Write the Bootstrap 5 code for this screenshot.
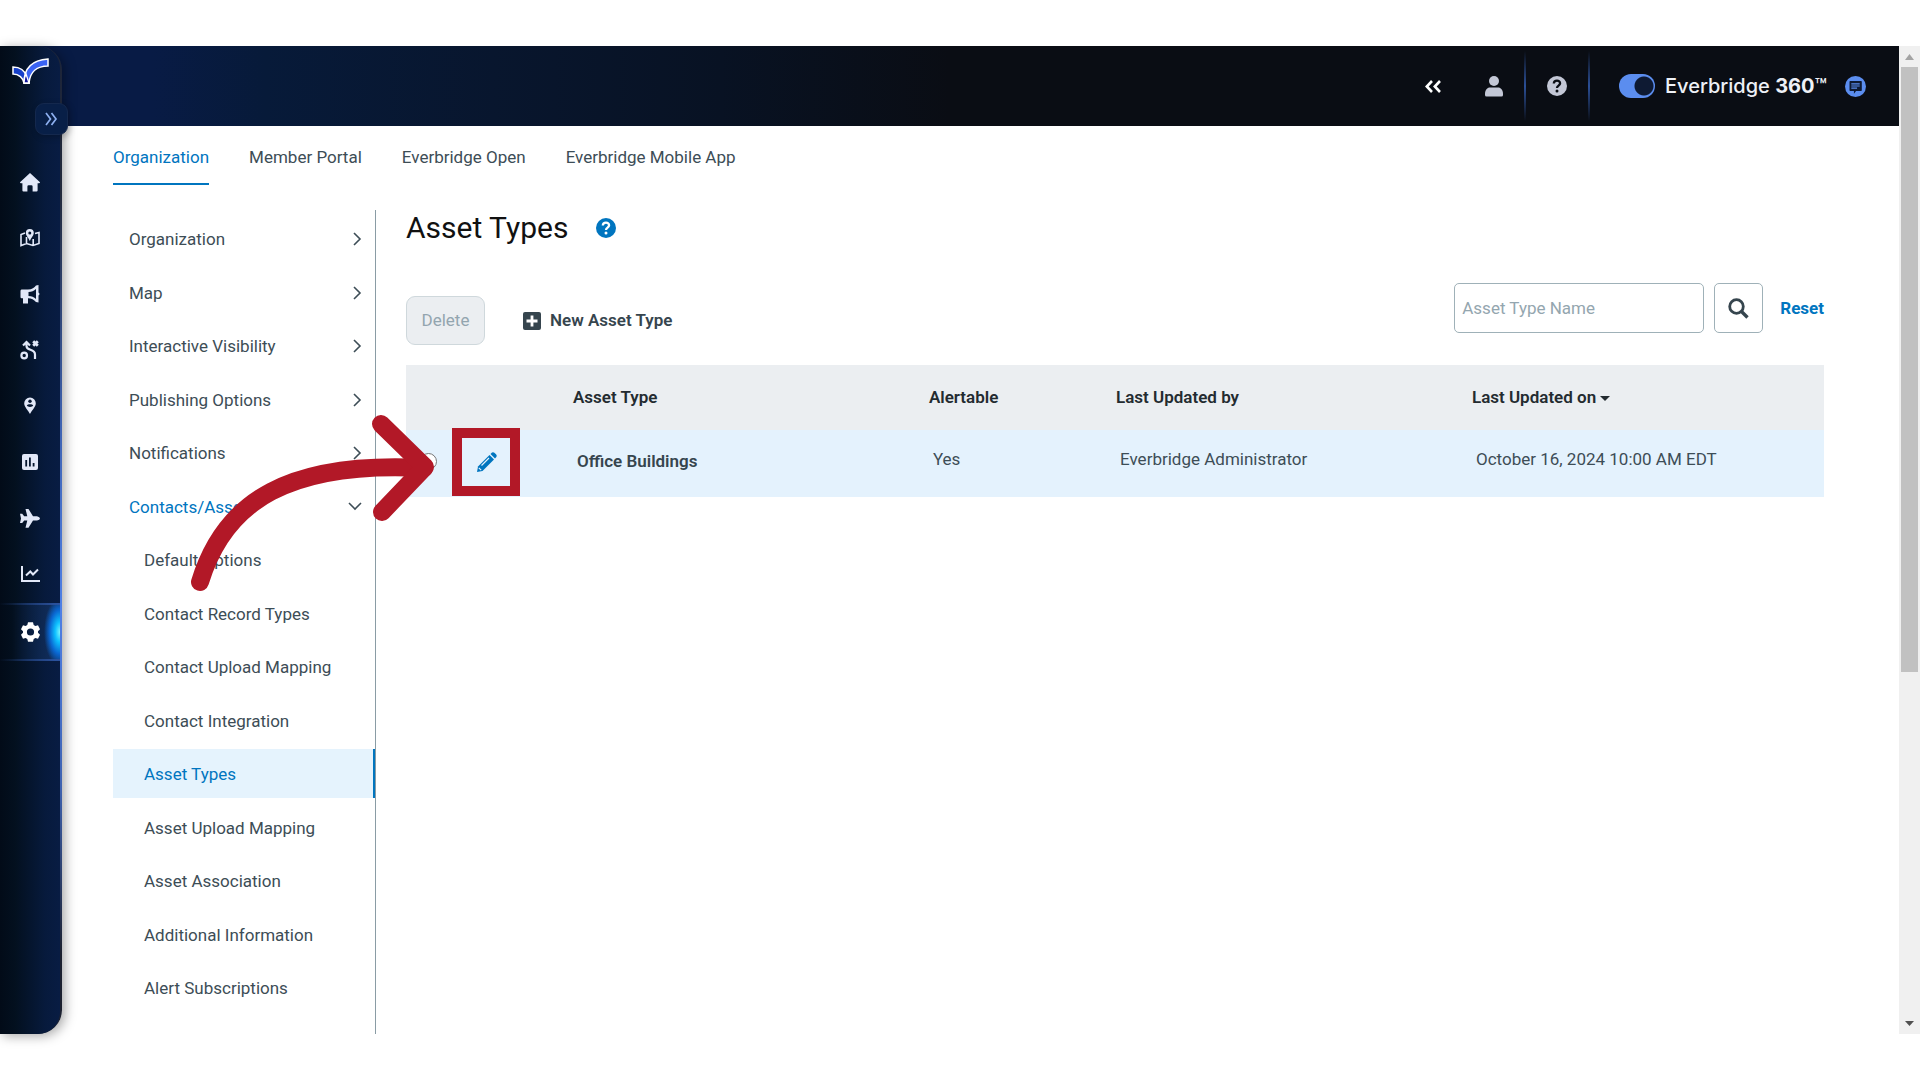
<!DOCTYPE html>
<html lang="en">
<head>
<meta charset="utf-8">
<meta name="viewport" content="width=device-width, initial-scale=1">
<title>Asset Types</title>
<link href="https://cdn.jsdelivr.net/npm/bootstrap@5.3.0/dist/css/bootstrap.min.css" rel="stylesheet">
<style>
  :root { --ink:#3d4d56; --blue:#0075bf; --line:#8a9ca5; --red:#b21827; }
  body { font-family:Roboto,"Liberation Sans",sans-serif; font-size:17px; line-height:24px; color:var(--ink); background:#fff; }
  a { color:inherit; text-decoration:none; }
  svg { display:block; flex:none; }
  .app-frame { margin:46px 0; min-height:calc(100vh - 92px); }

  /* left rail */
  .rail { width:62px; z-index:3; border-radius:0 24px 24px 0; padding-right:2px;
    background:linear-gradient(180deg,#1c2438 0%,#232a3c 15%,#3e62b0 38%,#4f80e6 57%,#3e62b0 75%,#1c2130 92%);
    box-shadow:3px 2px 12px rgba(0,0,0,.35); }
  .rail-inner { border-radius:0 22px 22px 0; background:linear-gradient(90deg,#020b18 0%,#03101f 25%,#071a3c 75%,#081c43 100%); }
  .rail-logo { padding:12px 0 0 12px; height:57px; }
  .rail-toggle { width:33px; height:32px; margin-left:35px; border:1px solid #14284d; border-radius:9px; background:#081f47; color:#8db0f0; box-shadow:2px 2px 6px rgba(0,0,0,.25); }
  .rail-links { padding-top:19px; }
  .rail-links a { height:56px; color:#e2e8f8; }
  .rail-links a.current { height:58px; margin-top:1px; color:#fff; border:solid; border-width:2px 0;
    border-image:linear-gradient(90deg,transparent,#2c519c) 1;
    background:radial-gradient(ellipse 16px 34px at 100% 50%,#7df6ff 0%,#0ec0ff 30%,#0a66d0 65%,transparent 100%),linear-gradient(90deg,transparent 20%,#12305f); }

  /* top bar */
  .topbar { height:80px; margin-left:-62px; padding-right:33px; background:linear-gradient(90deg,#081b45 0%,#081b45 8%,#071a39 14%,#08162e 26%,#081223 38%,#0a0d14 50%); color:#c3c7d6; }
  .topbar button { color:inherit; }
  .top-collapse.btn { margin-right:44px; }
  .top-user.btn { margin-right:21px; }
  .top-brand { gap:10px; margin:0 18px 0 29px; }
  .divider { width:2px; height:70px; background:linear-gradient(180deg,transparent,#2b4f97 50%,transparent); }
  .brand-switch.form-check-input { width:36px; height:24px; margin:0; border:0; background-color:#5b8def;
    background-image:radial-gradient(circle,#0e1a33 9px,transparent 10px); background-size:20px 20px; background-position:right 1px center; }
  .brand-label { font-family:Inter,Roboto,sans-serif; font-size:20px; font-weight:500; color:#eef1f7; }
  .brand-label b { font-weight:700; }

  /* tabs and menu */
  .workspace { padding:18px 75px 0 51px; }
  .tab-row { gap:40px; height:42px; }
  .tab-row a { height:41px; padding-top:1px; }
  .tab-row a.current { color:var(--blue); border-bottom:2px solid var(--blue); }
  .side-menu { width:263px; padding-top:4px; border-right:1px solid var(--line); }
  .side-menu li { margin-bottom:4px; }
  .side-menu li:nth-child(odd) { margin-bottom:5px; }
  .side-menu a { height:49px; padding:0 13px 0 16px; }
  .side-menu .sub a { padding-left:31px; }
  .side-menu .open a { color:var(--blue); }
  .side-menu .current a { color:var(--blue); background:#e5f3fd; border-right:2px solid var(--blue); }

  /* content */
  .content { padding-left:30px; }
  .content h1 { font-size:30px; line-height:36px; font-weight:400; color:#111; }
  .toolbar-row { margin-top:37px; }
  .action-group { gap:38px; padding:13px 0 20px; }
  .btn-del.btn { width:79px; height:49px; font-size:17px; border-color:#cfd8dc; border-radius:9px; background:#ebeef1; color:#93a5af; opacity:1; padding:0; }
  .btn-new.btn { gap:9px; color:#36454e; font-weight:600; font-size:17px; }
  .find-group { gap:10px; }
  .find-box.form-control { width:250px; height:50px; padding:0 7px; font-size:17px; border-color:#9fb1b8; border-radius:5px; color:var(--ink); }
  .find-box::placeholder { color:#94a6af; }
  .find-btn.btn { width:49px; height:50px; padding:0; border-color:#9fb1b8; border-radius:5px; color:#36454e; }
  .find-reset { margin-left:7px; color:var(--blue); }
  .asset-grid { table-layout:fixed; margin:0; }
  .asset-grid th { height:65px; padding:0 0 2px 11px; background:#ebeef1; color:#232b30; font-weight:600; vertical-align:middle; border:0; }
  .asset-grid td { height:67px; padding:0 0 9px 15px; background:#e4f2fd; color:var(--ink); vertical-align:middle; border:0; }
  .asset-grid td.strong-cell { font-weight:600; padding-bottom:5px; color:#36454e; }
  .asset-grid td.tool-cell { padding:0; vertical-align:top; }
  .asset-grid .form-check-input { width:17px; height:17px; margin:23px 0 0 14px; border:1px solid #767676; background:#fff; }
  .edit-box { width:68px; height:68px; margin:-2px 0 0 15px; border:10px solid var(--red); color:var(--blue); }
  .caret { display:inline-block; border:5px solid transparent; border-top-color:currentColor; border-bottom:0; vertical-align:middle; }

  .pointer { left:190px; top:367px; z-index:4; pointer-events:none; }
  .scroller { width:21px; background:#f0f0f0; padding:0 2px; }
  .scroller button { height:21px; color:#a3a3a3; }
  .scroller .thumb { height:605px; background:#c1c1c1; }
</style>
<script src="https://cdn.jsdelivr.net/npm/bootstrap@5.3.0/dist/js/bootstrap.bundle.min.js"></script>
</head>
<body>
<div class="app-frame d-flex position-relative">

  <aside class="rail d-flex flex-shrink-0 position-relative">
    <div class="rail-inner w-100">
      <a href="#" class="rail-logo d-block" aria-label="Everbridge home">
        <svg width="38" height="27" viewBox="0 0 38 27">
          <path d="M1 9C8 9 13 13 15 19L17 25H12C11 20 7 16 1 16Z" fill="#1740c9" stroke="#fff" stroke-width="1.5"/>
          <path d="M12 25C12 10 20 2 36 1V8C25 8 18 14 17 25Z" fill="#3a63f3" stroke="#fff" stroke-width="1.5"/>
          <path d="M14 16L17 25H12C12 22 13 18 14 16Z" fill="#10149a" stroke="#fff" stroke-width="1.3"/>
        </svg>
      </a>
      <button class="rail-toggle d-flex align-items-center justify-content-center p-0 position-relative" aria-label="Expand menu">
        <svg width="14" height="14" viewBox="0 0 14 14" fill="none" stroke="currentColor" stroke-width="1.700"><path d="M1 1L5.500 7L1 13M6.500 1L11 7L6.500 13"/></svg>
      </button>
      <nav class="rail-links d-flex flex-column">
        <a href="#" class="d-flex align-items-center justify-content-center" aria-label="Home"><svg width="20" height="19" viewBox="0 0 20 19" fill="currentColor"><path d="M10 0L20 9.300Q20 10.300 19 10.300H17.600V17.500Q17.600 18.600 16.500 18.600H12.600V13.500Q12.600 12.300 11.400 12.300H8.600Q7.400 12.300 7.400 13.500V18.600H3.500Q2.400 18.600 2.400 17.500V10.300H1Q0 10.300 0 9.300Z"/></svg></a>
        <a href="#" class="d-flex align-items-center justify-content-center" aria-label="Map"><svg width="20" height="18" viewBox="0 0 20 18"><path d="M5 4L1 5.500V16.500L6.500 14.500L13 16.500L19 14.500V3.500L15 4.500M6.500 8V14.500M13.200 10V16.500" fill="none" stroke="currentColor" stroke-width="1.600"/><path fill-rule="evenodd" fill="currentColor" d="M9.800 0A4 4 0 0 1 13.800 4C13.800 6.500 11 9 9.800 12C8.600 9 5.800 6.500 5.800 4A4 4 0 0 1 9.800 0ZM9.800 2.500A1.500 1.500 0 1 0 9.800 5.500A1.500 1.500 0 1 0 9.800 2.500Z"/></svg></a>
        <a href="#" class="d-flex align-items-center justify-content-center" aria-label="Alerts"><svg width="20" height="19" viewBox="0 0 20 19" fill="currentColor" fill-rule="evenodd"><path d="M1.500 4.500H8C12 4.500 14.500 2.500 16 0.500L18.500 0V7.500Q19.500 8.200 19.500 9T18.500 10.500V17.500L16 17C14 14.500 11.500 13.200 8 13.200V18.500H3V13.200H1.500Q.5 13.200 .5 12V6Q.5 4.500 1.500 4.500ZM8.500 7V11C11.500 11 14 12 16 14V4C14 6 11.500 7 8.500 7Z"/></svg></a>
        <a href="#" class="d-flex align-items-center justify-content-center" aria-label="Orchestration"><svg width="20" height="20" viewBox="0 0 20 20" fill="none" stroke="currentColor" stroke-width="2.200"><circle cx="4.200" cy="15.500" r="2.800"/><path d="M3 5.500L6.500 2L10 5.500M6.500 2V6C6.500 11.500 15 8 15 14.500V19"/><path d="M13.200 1.200L17.800 5.800M17.800 1.200L13.200 5.800" stroke-width="2.800"/></svg></a>
        <a href="#" class="d-flex align-items-center justify-content-center" aria-label="Locations"><svg width="12" height="18" viewBox="0 0 12 18"><path fill="currentColor" d="M6 .5A5.800 5.800 0 0 1 11.800 6.300C11.800 10 7.800 13.500 6 17C4.200 13.500 .2 10 .2 6.300A5.800 5.800 0 0 1 6 .5Z"/><circle cx="6" cy="4.300" r="1.700" fill="#06162f"/><path d="M2.800 8.600C3.500 6.800 8.500 6.800 9.200 8.600C8.500 10.400 3.500 10.400 2.800 8.600Z" fill="#06162f"/></svg></a>
        <a href="#" class="d-flex align-items-center justify-content-center" aria-label="Reports"><svg width="16" height="16" viewBox="0 0 16 16"><rect width="16" height="16" rx="2" fill="currentColor"/><path d="M4.200 6V12.500M7.900 3.500V12.500M11.600 9V12.500" stroke="#06162f" stroke-width="1.800"/></svg></a>
        <a href="#" class="d-flex align-items-center justify-content-center" aria-label="Travel"><svg width="20" height="19" viewBox="0 0 20 19" fill="currentColor"><path d="M5.500 0H8.500L13 7.200H17Q20 8 20 9.400T17 11.600H13L8.500 18.800H5.500L7.300 11.600H4.200L2.200 14H0L1 9.400L0 4.800H2.200L4.200 7.200H7.300Z"/></svg></a>
        <a href="#" class="d-flex align-items-center justify-content-center" aria-label="Analytics"><svg width="19" height="18" viewBox="0 0 19 18" fill="none" stroke="currentColor" stroke-width="2"><path d="M1 1V16H19M5 10.500L9.300 6.500L12 9.500L17 4.500"/></svg></a>
        <a href="#" class="current d-flex align-items-center justify-content-center" aria-label="Settings" aria-current="page"><svg width="19" height="20" viewBox="0 0 19 20" fill="currentColor" fill-rule="evenodd"><path d="M7 .3H12L12.700 3L14.400 4L17 3.200L19 7.300L17 9.200V10.800L19 12.700L17 16.800L14.400 16L12.700 17L12 19.700H7L6.300 17L4.600 16L2 16.800L0 12.700L2 10.800V9.200L0 7.300L2 3.200L4.600 4L6.300 3ZM9.500 6.400A3.600 3.600 0 1 0 9.500 13.600A3.600 3.600 0 1 0 9.500 6.400Z"/></svg></a>
      </nav>
    </div>
  </aside>

  <div class="flex-grow-1 d-flex flex-column">
    <header class="topbar d-flex align-items-center justify-content-end">
      <button class="top-collapse btn p-0 border-0 text-white" aria-label="Collapse"><svg width="16" height="13" viewBox="0 0 16 13" fill="none" stroke="currentColor" stroke-width="2.600"><path d="M7 1L1.800 6.500L7 12M15 1L9.800 6.500L15 12"/></svg></button>
      <button class="top-user btn p-0 border-0" aria-label="Account"><svg width="18" height="21" viewBox="0 0 18 21" fill="currentColor"><circle cx="9" cy="5" r="5"/><path d="M0 18C0 13 3 11.500 5 11.500H13C15 11.500 18 13 18 18V19Q18 20.500 16.500 20.500H1.500Q0 20.500 0 19Z"/></svg></button>
      <span class="divider"></span>
      <button class="btn p-0 border-0 mx-3 px-1" aria-label="Help"><svg width="22" height="20" viewBox="0 0 20 20"><circle cx="10" cy="10" r="10" fill="currentColor"/><path d="M6.800 7.500C7 3.500 13.200 3.800 13.100 7.400C13 9.700 10 9.500 10 12" fill="none" stroke="#0a0d14" stroke-width="2.300"/><circle cx="10" cy="15" r="1.500" fill="#0a0d14"/></svg></button>
      <span class="divider"></span>
      <div class="top-brand d-flex align-items-center">
        <input class="brand-switch form-check-input rounded-pill" type="checkbox" role="switch" id="suite" checked>
        <label class="brand-label" for="suite">Everbridge <b>360</b>™</label>
      </div>
      <button class="btn p-0 border-0" aria-label="Chat"><svg width="21" height="21" viewBox="0 0 20 20"><circle cx="10" cy="10" r="10" fill="#5b8def"/><path d="M5 4.800H15.300Q16 4.800 16 5.500V13.500Q16 14.200 15.300 14.200H10.500L8.500 16.800V14.200H5Q4.300 14.200 4.300 13.500V5.500Q4.300 4.800 5 4.800Z" fill="#0e1a33"/><path d="M6 7.500H14M6 9.500H14M6 11.500H11.500" stroke="#5b8def" stroke-width="1.100"/></svg></button>
    </header>

    <div class="workspace flex-grow-1 d-flex flex-column">
      <nav class="tab-row d-flex">
        <a href="#" class="current" aria-current="page">Organization</a>
        <a href="#">Member Portal</a>
        <a href="#">Everbridge Open</a>
        <a href="#">Everbridge Mobile App</a>
      </nav>

      <div class="d-flex flex-grow-1 mt-4">
        <ul class="side-menu list-unstyled mb-0 flex-shrink-0" id="menu">
          <li><a href="#" class="d-flex align-items-center justify-content-between">Organization<svg width="9" height="14" viewBox="0 0 9 14" fill="none" stroke="#3d4d56" stroke-width="1.600"><path d="M1 1L7 7L1 13"/></svg></a></li>
          <li><a href="#" class="d-flex align-items-center justify-content-between">Map<svg width="9" height="14" viewBox="0 0 9 14" fill="none" stroke="#3d4d56" stroke-width="1.600"><path d="M1 1L7 7L1 13"/></svg></a></li>
          <li><a href="#" class="d-flex align-items-center justify-content-between">Interactive Visibility<svg width="9" height="14" viewBox="0 0 9 14" fill="none" stroke="#3d4d56" stroke-width="1.600"><path d="M1 1L7 7L1 13"/></svg></a></li>
          <li><a href="#" class="d-flex align-items-center justify-content-between">Publishing Options<svg width="9" height="14" viewBox="0 0 9 14" fill="none" stroke="#3d4d56" stroke-width="1.600"><path d="M1 1L7 7L1 13"/></svg></a></li>
          <li><a href="#" class="d-flex align-items-center justify-content-between">Notifications<svg width="9" height="14" viewBox="0 0 9 14" fill="none" stroke="#3d4d56" stroke-width="1.600"><path d="M1 1L7 7L1 13"/></svg></a></li>
          <li class="open"><a href="#" class="d-flex align-items-center justify-content-between">Contacts/Assets<svg width="14" height="9" viewBox="0 0 14 9" fill="none" stroke="#3d4d56" stroke-width="1.600"><path d="M1 1L7 7L13 1"/></svg></a></li>
          <li class="sub"><a href="#" class="d-flex align-items-center">Default Options</a></li>
          <li class="sub"><a href="#" class="d-flex align-items-center">Contact Record Types</a></li>
          <li class="sub"><a href="#" class="d-flex align-items-center">Contact Upload Mapping</a></li>
          <li class="sub"><a href="#" class="d-flex align-items-center">Contact Integration</a></li>
          <li class="sub current"><a href="#" class="d-flex align-items-center" aria-current="page">Asset Types</a></li>
          <li class="sub"><a href="#" class="d-flex align-items-center">Asset Upload Mapping</a></li>
          <li class="sub"><a href="#" class="d-flex align-items-center">Asset Association</a></li>
          <li class="sub"><a href="#" class="d-flex align-items-center">Additional Information</a></li>
          <li class="sub"><a href="#" class="d-flex align-items-center">Alert Subscriptions</a></li>
        </ul>

        <main class="content flex-grow-1">
          <div class="d-flex align-items-center">
            <h1 class="mb-0">Asset Types</h1>
            <a href="#" class="ms-4 ps-1" aria-label="Help with asset types"><svg width="20" height="20" viewBox="0 0 20 20"><circle cx="10" cy="10" r="10" fill="#0075bf"/><path d="M6.800 7.500C7 3.500 13.200 3.800 13.100 7.400C13 9.700 10 9.500 10 12" fill="none" stroke="#fff" stroke-width="2.300"/><circle cx="10" cy="15" r="1.500" fill="#fff"/></svg></a>
          </div>

          <div class="toolbar-row d-flex justify-content-between">
            <div class="action-group d-flex align-items-center">
              <button class="btn btn-del" disabled>Delete</button>
              <button class="btn btn-new d-flex align-items-center p-0 border-0"><svg width="18" height="18" viewBox="0 0 18 18"><rect width="18" height="18" rx="2" fill="currentColor"/><path d="M9 3.500V14.500M3.500 9H14.500" stroke="#fff" stroke-width="2.800"/></svg>New Asset Type</button>
            </div>
            <form class="find-group d-flex align-items-center align-self-start">
              <input class="form-control find-box" type="text" placeholder="Asset Type Name" aria-label="Asset Type Name">
              <button type="button" class="btn find-btn d-flex align-items-center justify-content-center" aria-label="Search"><svg width="21" height="21" viewBox="0 0 21 21" fill="none" stroke="currentColor"><circle cx="8.500" cy="8.500" r="6.800" stroke-width="2.800"/><path d="M13.500 13.500L19.500 19.500" stroke-width="3.400"/></svg></button>
              <a href="#" class="find-reset fw-bold">Reset</a>
            </form>
          </div>

          <table class="table asset-grid w-100">
            <colgroup><col style="width:2.200%"><col style="width:8.800%"><col style="width:25.100%"><col style="width:13.200%"><col style="width:25.100%"><col></colgroup>
            <thead><tr><th></th><th></th><th scope="col">Asset Type</th><th scope="col">Alertable</th><th scope="col">Last Updated by</th><th scope="col">Last Updated on <span class="caret"></span></th></tr></thead>
            <tbody><tr>
              <td class="tool-cell"><input class="form-check-input d-block" type="radio" name="asset" aria-label="Office Buildings"></td>
              <td class="tool-cell"><a href="#" class="edit-box d-flex align-items-center justify-content-center" aria-label="Edit Office Buildings"><svg width="21" height="21" viewBox="0 0 21 21"><path d="M13.500 3L18 7.500L6.500 19L1 20L2 14.500Z" fill="currentColor"/><path d="M14.500 2L16 .6Q17.200 -.3 18.400 .8L20.200 2.600Q21.200 3.800 20.300 5L19 6.500Z" fill="currentColor"/><path d="M5.500 13.500L13 6M2.800 15.800L5.200 18.200" stroke="#e4f2fd" stroke-width="1.200"/></svg></a></td>
              <td class="strong-cell">Office Buildings</td><td>Yes</td><td>Everbridge Administrator</td><td>October 16, 2024 10:00 AM EDT</td>
            </tr></tbody>
          </table>
        </main>
      </div>
    </div>
  </div>

  <div class="scroller d-flex flex-column flex-shrink-0" aria-hidden="true">
    <button class="btn p-0 border-0 d-flex align-items-center justify-content-center" tabindex="-1"><svg width="9" height="6" viewBox="0 0 9 6" fill="currentColor"><path d="M0 6L4.500 0L9 6Z"/></svg></button>
    <div class="thumb"></div>
    <button class="btn p-0 border-0 mt-auto d-flex align-items-center justify-content-center" tabindex="-1"><svg width="9" height="5" viewBox="0 0 9 5" fill="#505050"><path d="M0 0L4.500 5L9 0Z"/></svg></button>
  </div>

  <!-- arrow that points to the edit pencil -->
  <svg class="pointer position-absolute" width="246" height="182" viewBox="190 413 246 182" fill="none" stroke="#b21827" stroke-width="18" stroke-linecap="round" stroke-linejoin="round"><path d="M200 582C225 500 290 461 424 468"/><path d="M381 424L425 467L382 512"/></svg>
</div>
</body>
</html>
